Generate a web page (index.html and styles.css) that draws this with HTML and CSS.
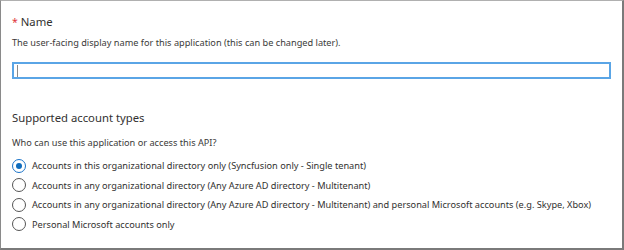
FILE: index.html
```html
<!DOCTYPE html>
<html lang="en">
<head>
  <meta charset="UTF-8" />
  <meta name="viewport" content="width=device-width, initial-scale=1" />
  <title>Register an application</title>
  <link rel="stylesheet" href="styles.css">
</head>
<body>

  <div class="panel">
    <div class="field">
      <div class="field-label"><span class="required">*</span> Name</div>
      <p class="hint hint-name">The user-facing display name for this application (this can be changed later).</p>
      <div class="text-input"><span class="caret"></span></div>
    </div>

    <div class="field field-accounts">
      <h2 class="section-title">Supported account types</h2>
      <p class="hint hint-who">Who can use this application or access this API?</p>

      <div class="options">
        <label class="option">
          <span class="radio checked"></span>
          Accounts in this organizational directory only (Syncfusion only - Single tenant)
        </label>
        <label class="option">
          <span class="radio"></span>
          Accounts in any organizational directory (Any Azure AD directory - Multitenant)
        </label>
        <label class="option">
          <span class="radio"></span>
          Accounts in any organizational directory (Any Azure AD directory - Multitenant) and personal Microsoft accounts (e.g. Skype, Xbox)
        </label>
        <label class="option">
          <span class="radio"></span>
          Personal Microsoft accounts only
        </label>
      </div>
    </div>
  </div>

</body>
</html>
```

FILE: styles.css
```css
body {
  font-family: 'Noto Sans', 'Open Sans', sans-serif;
  background: #ffffff;
  margin: 0;
  padding: 0;
  color: #323130;
}

.panel {
  box-sizing: border-box;
  width: 624px;
  height: 250px;
  border-left: 1px solid #8a8a8a;
  border-top: 1px solid #b0b0b0;
  border-right: 2px solid #7a7a7a;
  border-bottom: 2px solid #7a7a7a;
  padding: 13px 11px 0 11px;
}

.field-label {
  font-size: 11.3px;
  line-height: 16px;
  color: #323130;
}

.required {
  color: #e0333a;
  font-size: 10.5px;
}

.hint {
  font-size: 9.2px;
  line-height: 12px;
  margin: 0;
  color: #3b3a39;
}

.hint-name {
  margin-top: 7px;
}

.text-input {
  box-sizing: border-box;
  height: 17px;
  width: 599px;
  margin-top: 13px;
  border: 2px solid #5aa5e6;
  padding: 1px 3px;
}

.caret {
  display: block;
  width: 1px;
  height: 12px;
  background: #8a8a8a;
}

.field-accounts {
  margin-top: 30px;
}

.section-title {
  font-size: 11.3px;
  line-height: 18px;
  font-weight: normal;
  margin: 0;
  color: #323130;
}

.hint-who {
  margin-top: 10px;
}

.options {
  margin-top: 7px;
}

.option {
  display: flex;
  align-items: center;
  height: 19.5px;
  font-size: 9.2px;
  color: #323130;
}

.radio {
  box-sizing: border-box;
  width: 14px;
  height: 14px;
  border: 1px solid #555555;
  border-radius: 50%;
  margin-right: 6px;
  display: flex;
  align-items: center;
  justify-content: center;
}

.radio.checked {
  border-color: #1a73c8;
}

.radio.checked::after {
  content: "";
  width: 6px;
  height: 6px;
  border-radius: 50%;
  background: #0f6cbd;
}
```
